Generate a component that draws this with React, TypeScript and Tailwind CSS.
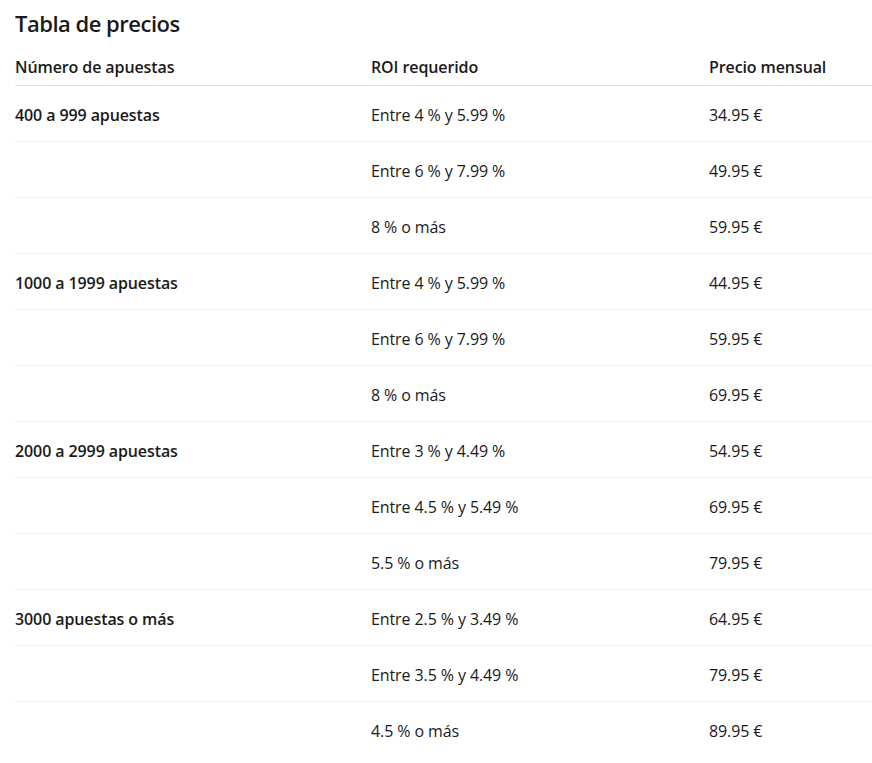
const rows = [
  { group: '400 a 999 apuestas', roi: 'Entre 4 % y 5.99 %', price: '34.95 €' },
  { group: '', roi: 'Entre 6 % y 7.99 %', price: '49.95 €' },
  { group: '', roi: '8 % o más', price: '59.95 €' },
  { group: '1000 a 1999 apuestas', roi: 'Entre 4 % y 5.99 %', price: '44.95 €' },
  { group: '', roi: 'Entre 6 % y 7.99 %', price: '59.95 €' },
  { group: '', roi: '8 % o más', price: '69.95 €' },
  { group: '2000 a 2999 apuestas', roi: 'Entre 3 % y 4.49 %', price: '54.95 €' },
  { group: '', roi: 'Entre 4.5 % y 5.49 %', price: '69.95 €' },
  { group: '', roi: '5.5 % o más', price: '79.95 €' },
  { group: '3000 apuestas o más', roi: 'Entre 2.5 % y 3.49 %', price: '64.95 €' },
  { group: '', roi: 'Entre 3.5 % y 4.49 %', price: '79.95 €' },
  { group: '', roi: '4.5 % o más', price: '89.95 €' },
];

export default function App() {
  return (
    <div className="bg-white pl-[15px] text-[#1a1a1a] font-['Open_Sans',sans-serif]">
      <h2 className="pt-[7px] text-[22px] leading-[32px] font-semibold tracking-[-0.5px]">Tabla de precios</h2>
      <table className="w-full border-collapse text-[16px] tracking-[-0.1px]">
        <thead>
          <tr className="h-[46px] border-b border-[#e0e0e0]">
            <th className="w-[356px] text-left font-semibold pt-[10px]">Número de apuestas</th>
            <th className="w-[338px] text-left font-semibold pt-[10px]">ROI requerido</th>
            <th className="text-left font-semibold pt-[10px]">Precio mensual</th>
          </tr>
        </thead>
        <tbody>
          {rows.map((r, i) => (
            <tr key={i} className={'h-[56px] align-top ' + (i < rows.length - 1 ? 'border-b border-[#efefef]' : '')}>
              <td className="pt-[17px] font-semibold">{r.group}</td>
              <td className="pt-[17px]">{r.roi}</td>
              <td className="pt-[17px]">{r.price}</td>
            </tr>
          ))}
        </tbody>
      </table>
    </div>
  );
}
